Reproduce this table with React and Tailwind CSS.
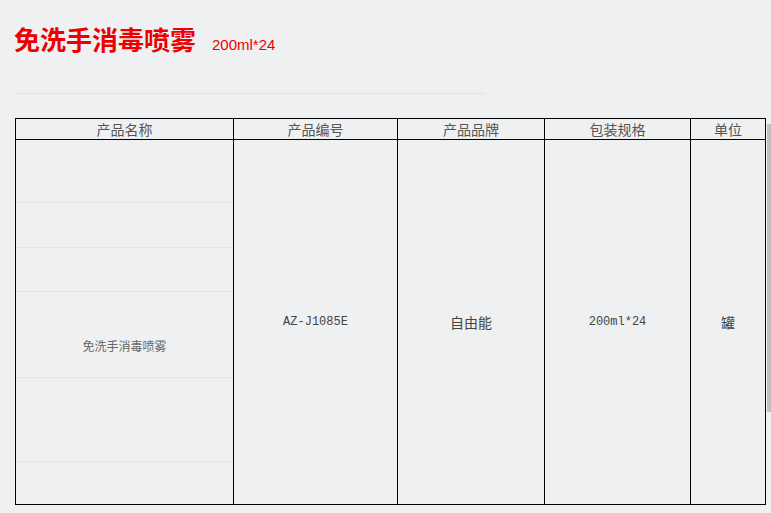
import React from 'react';

const cjk = { fontFamily: '"Noto Sans CJK SC", "Noto Sans", sans-serif' };
const mono = { fontFamily: '"Liberation Mono", "Noto Sans CJK SC", monospace' };

const headers = ['产品名称', '产品编号', '产品品牌', '包装规格', '单位'];
const widths = ['w-[218px]', 'w-[164px]', 'w-[147px]', 'w-[146px]', 'w-[75px]'];

const App = () => {
  return (
    <div className="relative w-[771px] h-[513px] overflow-hidden bg-[#eff0f2]" style={cjk}>
      {/* title */}
      <div className="flex items-baseline pl-[14px] pt-[21px] h-[93px]">
        <h1 className="text-[26px] font-bold text-[#ee0000] leading-[36px]" style={cjk}>免洗手消毒喷雾</h1>
        <span className="ml-[16px] text-[15px] text-[#ee0000]" style={{ fontFamily: '"Liberation Sans", sans-serif' }}>200ml*24</span>
      </div>
      <div className="ml-[15px] w-[470px] h-px bg-[#e1e2e4]" />

      <table className="ml-[15px] mt-[24px] table-fixed border-collapse text-[#555]">
        <thead>
          <tr className="h-[21px]">
            {headers.map((h, i) => (
              <th key={h} className={`${widths[i]} border border-black p-0 font-normal text-[14px] leading-[19px]`}>{h}</th>
            ))}
          </tr>
        </thead>
        <tbody>
          <tr className="h-[365px]">
            <td className="border border-black p-0 align-top">
              <div className="flex flex-col text-[12px] text-[#666]">
                <div className="h-[63px] border-b border-[#e3e4e6]" />
                <div className="h-[45px] border-b border-[#e3e4e6]" />
                <div className="h-[44px] border-b border-[#e3e4e6]" />
                <div className="h-[86px] border-b border-[#e3e4e6] pt-[46px] text-center leading-[16px]">免洗手消毒喷雾</div>
                <div className="h-[84px] border-b border-[#e3e4e6]" />
                <div className="h-[41px]" />
              </div>
            </td>
            <td className="border border-black p-0 text-center text-[12px] text-[#444]" style={mono}>AZ-J1085E</td>
            <td className="border border-black p-0 text-center text-[14px] text-[#444]">自由能</td>
            <td className="border border-black p-0 text-center text-[12px] text-[#444]" style={mono}>200ml*24</td>
            <td className="border border-black p-0 text-center text-[14px] text-[#444]">罐</td>
          </tr>
        </tbody>
      </table>

      {/* scrollbar thumb */}
      <div className="absolute left-[767px] top-[124px] w-[4px] h-[288px] bg-[#c1c1c1]" />
    </div>
  );
};

export default App;
